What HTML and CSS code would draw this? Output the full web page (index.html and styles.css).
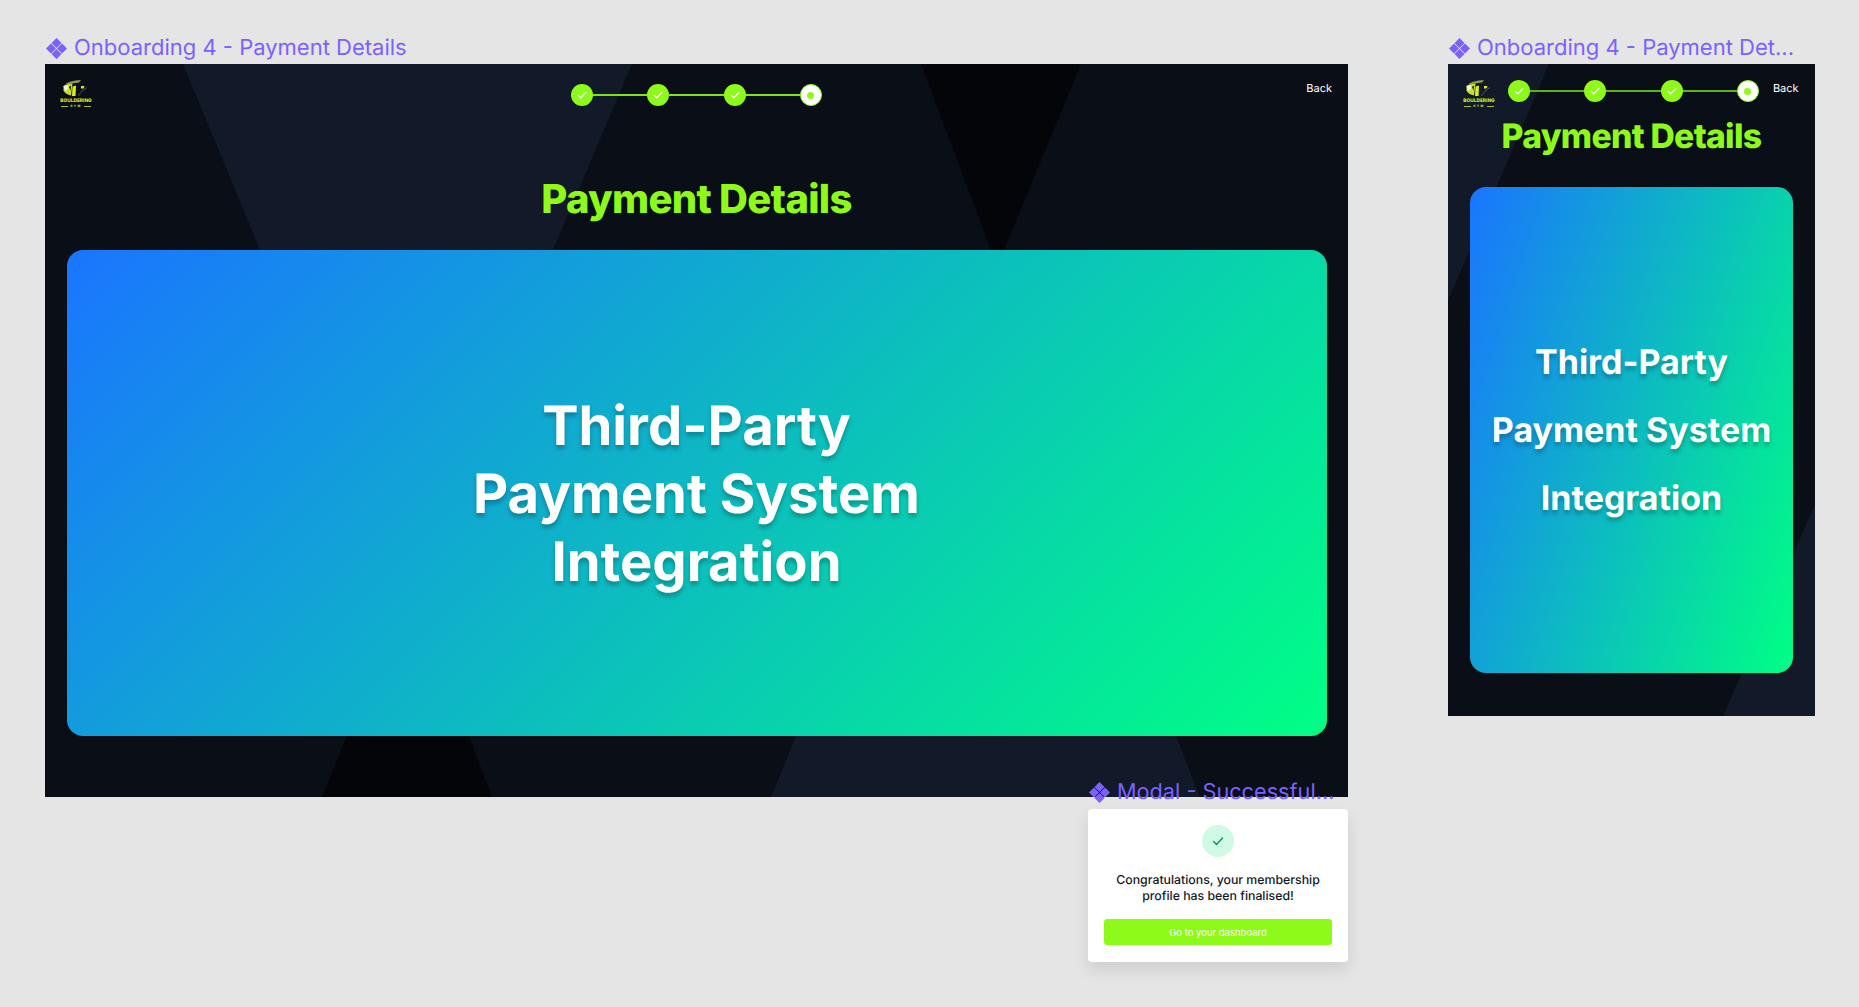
FILE: index.html
```html
<!DOCTYPE html>
<html lang="en">
<head>
    <meta charset="UTF-8">
    <meta name="viewport" content="width=device-width, initial-scale=1.0">
    <title>Onboarding 4 - Payment Details</title>
    <link rel="stylesheet" href="styles.css">
</head>
<body>
    <svg class="defs" width="0" height="0">
        <symbol id="component" viewBox="0 0 21 21">
            <path fill="#7b61ff" d="M10.500 0l5 5-5 5-5-5zM5 5.500l5 5-5 5-5-5zM16 5.500l5 5-5 5-5-5zM10.500 11l5 5-5 5-5-5z"/>
        </symbol>
        <symbol id="tick" viewBox="0 0 12 12">
            <path fill="none" stroke="#fff" stroke-width="1.4" stroke-linecap="round" stroke-linejoin="round" d="M2.200 6.400l2.600 2.400 5-5.400"/>
        </symbol>
        <symbol id="logo" viewBox="0 0 30 18">
            <path fill="#8f9a5c" d="M4 4.500C7 1.800 12 .4 20 0l-2 2.500-10 1.500z"/>
            <path fill="#c6e02a" d="M2.500 6l5-2 4-.5-1.500 12C6.500 15 3.500 13 2.500 10.500z"/>
            <path fill="#f0f5d8" d="M2.500 6l4-1.500 1 4-3.500 3z"/>
            <path fill="#0a0e16" d="M8 7l2-1.500-.5 5z"/>
            <path fill="#d8ee20" d="M11.500 6.500l3.500-1-.5 10.500h-3.500z"/>
            <path fill="#d8ee20" d="M20 6h3.500l-1 2.500h-2.500z"/>
            <path fill="none" stroke="#7d826f" stroke-width=".6" d="M17.500 16c.5-3 3-3 3.500-5l5-3.500"/>
        </symbol>
    </svg>

    <div class="frame-label label-desktop">
        <svg class="label-icon"><use href="#component"></use></svg>
        <span>Onboarding 4 - Payment Details</span>
    </div>
    <div class="frame-label label-mobile">
        <svg class="label-icon"><use href="#component"></use></svg>
        <span>Onboarding 4 - Payment Det...</span>
    </div>

    <!-- desktop frame -->
    <section class="frame frame-desktop">
        <svg class="frame-bg" viewBox="0 0 1303 733" width="1303" height="733">
            <polygon class="shape-light" points="138,0 587,0 508,186 469,280 255,280 215,186"/>
            <polygon class="shape-black" points="876,0 1036,0 959,186 952,204 946,186"/>
            <polygon class="shape-black" points="302,672 424,672 447,733 277,733"/>
            <polygon class="shape-light" points="751,672 1131,672 1155,733 726,733"/>
        </svg>
        <header class="topbar topbar-desktop">
            <div class="logo">
                <svg class="logo-mark"><use href="#logo"></use></svg>
                <div class="logo-name">BOULDERING</div>
                <div class="logo-sub">GYM</div>
            </div>
            <div class="stepper">
                <span class="step"><svg class="tick"><use href="#tick"></use></svg></span>
                <span class="step-line"></span>
                <span class="step"><svg class="tick"><use href="#tick"></use></svg></span>
                <span class="step-line"></span>
                <span class="step"><svg class="tick"><use href="#tick"></use></svg></span>
                <span class="step-line"></span>
                <span class="step step-current"></span>
            </div>
            <a class="back">Back</a>
        </header>
        <h1 class="title">Payment Details</h1>
        <div class="pay-card">
            <p>Third-Party<br>Payment System<br>Integration</p>
        </div>
    </section>

    <!-- mobile frame -->
    <section class="frame frame-mobile">
        <svg class="frame-bg" viewBox="0 0 367 652" width="367" height="652">
            <polygon class="shape-light" points="0,0 101,0 0,237"/>
            <polygon class="shape-light" points="367,440 367,652 275,652"/>
        </svg>
        <header class="topbar topbar-mobile">
            <div class="logo">
                <svg class="logo-mark"><use href="#logo"></use></svg>
                <div class="logo-name">BOULDERING</div>
                <div class="logo-sub">GYM</div>
            </div>
            <div class="stepper">
                <span class="step"><svg class="tick"><use href="#tick"></use></svg></span>
                <span class="step-line"></span>
                <span class="step"><svg class="tick"><use href="#tick"></use></svg></span>
                <span class="step-line"></span>
                <span class="step"><svg class="tick"><use href="#tick"></use></svg></span>
                <span class="step-line"></span>
                <span class="step step-current"></span>
            </div>
            <a class="back">Back</a>
        </header>
        <h1 class="title">Payment Details</h1>
        <div class="pay-card">
            <p>Third-Party<br>Payment System<br>Integration</p>
        </div>
    </section>

    <div class="frame-label label-modal">
        <svg class="label-icon"><use href="#component"></use></svg>
        <span>Modal - Successful...</span>
    </div>
    <section class="modal">
        <div class="modal-icon">
            <svg width="14" height="14" viewBox="0 0 14 14"><path fill="none" stroke="#059669" stroke-width="1.4" stroke-linecap="round" stroke-linejoin="round" d="M2.500 7.500l3 3 6-6.500"/></svg>
        </div>
        <p class="modal-text">Congratulations, your membership<br>profile has been finalised!</p>
        <button class="modal-btn">Go to your dashboard</button>
    </section>
</body>
</html>
```

FILE: styles.css
```css
* {
    box-sizing: border-box;
}
body {
    margin: 0;
    width: 1859px;
    height: 1007px;
    position: relative;
    overflow: hidden;
    background: #e5e5e5;
    font-family: Inter, "Liberation Sans", sans-serif;
    text-rendering: geometricPrecision;
}
.defs {
    position: absolute;
}

/* canvas items */
.frame-label {
    position: absolute;
    display: flex;
    align-items: center;
    gap: 7px;
    height: 26px;
    color: #7b61ff;
    font-size: 22px;
    white-space: nowrap;
    z-index: 2;
}
.label-icon {
    width: 21px;
    height: 21px;
    flex: none;
}
.label-desktop {
    left: 46px;
    top: 35px;
}
.label-mobile {
    left: 1449px;
    top: 35px;
}
.label-modal {
    left: 1089px;
    top: 779px;
    font-size: 21.700px;
}

.frame {
    position: absolute;
    top: 64px;
    display: flex;
    flex-direction: column;
    align-items: center;
    background: #0a0e16;
    overflow: hidden;
}
.frame-desktop {
    left: 45px;
    width: 1303px;
    height: 733px;
}
.frame-mobile {
    left: 1448px;
    width: 367px;
    height: 652px;
}
.frame-bg {
    position: absolute;
    left: 0;
    top: 0;
}
.shape-light {
    fill: #121929;
}
.shape-black {
    fill: #040509;
}

/* top bar */
.topbar {
    position: relative;
    width: 100%;
    display: grid;
    align-items: start;
}
.topbar-desktop {
    grid-template-columns: 1fr auto 1fr;
    height: 62px;
    padding: 16px 16px 0;
}
.topbar-mobile {
    grid-template-columns: 30px auto 1fr;
    column-gap: 14px;
    height: 48px;
    padding: 16px 17px 0 16px;
}
.logo {
    width: 30px;
    display: flex;
    flex-direction: column;
    align-items: center;
    color: #d8ee20;
}
.logo-mark {
    width: 30px;
    height: 18px;
}
.logo-name {
    font-size: 4.800px;
    font-weight: 800;
    line-height: 6px;
    white-space: nowrap;
}
.logo-sub {
    width: 100%;
    display: flex;
    align-items: center;
    justify-content: center;
    gap: 2px;
    font-size: 3px;
    font-weight: 700;
    line-height: 4px;
    letter-spacing: 1.5px;
    white-space: nowrap;
}
.logo-sub::before,
.logo-sub::after {
    content: "";
    flex: 1;
    height: 1px;
    background: #a8ba20;
}
.stepper {
    display: flex;
    align-items: center;
}
.topbar-desktop .stepper {
    margin-top: 4px;
}
.step {
    width: 22px;
    height: 22px;
    flex: none;
    display: flex;
    align-items: center;
    justify-content: center;
    border-radius: 50%;
    background: #8dfa1a;
}
.step-line {
    width: 54.300px;
    height: 2px;
    background: #7fe318;
}
.topbar-mobile .step-line {
    background: #5cb314;
}
.step-current {
    background: #fff;
    border: 1px solid #8dfa1a;
}
.step-current::after {
    content: "";
    width: 7px;
    height: 7px;
    border-radius: 50%;
    background: #8dfa1a;
}
.tick {
    width: 12px;
    height: 12px;
}
.back {
    justify-self: end;
    color: #fff;
    font-size: 11px;
    line-height: 16px;
}

.title {
    position: relative;
    margin: 0;
    color: #8dfa1a;
    font-weight: 800;
    letter-spacing: -0.7px;
    text-align: center;
}
.frame-desktop .title {
    font-size: 40px;
    line-height: 48px;
    margin-top: 49px;
}
.frame-mobile .title {
    font-size: 33.700px;
    line-height: 40px;
    margin-top: 5px;
}

.pay-card {
    position: relative;
    height: 486px;
    display: flex;
    align-items: center;
    justify-content: center;
    border-radius: 16px;
    color: #fff;
    font-weight: 700;
    line-height: 68px;
    text-align: center;
    text-shadow: 0 4px 4px rgba(0, 0, 0, 0.25);
}
.pay-card p {
    margin: 0;
}
.frame-desktop .pay-card {
    width: 1260px;
    margin-top: 27px;
    padding-top: 2px;
    font-size: 54.400px;
    background: linear-gradient(135deg, #1a75ff 0%, #00ff85 100%);
}
.frame-mobile .pay-card {
    width: 323px;
    margin-top: 30px;
    padding-top: 2px;
    font-size: 34px;
    background: linear-gradient(108deg, #1a75ff 0%, #00ff85 100%);
}

/* modal */
.modal {
    position: absolute;
    left: 1088px;
    top: 809px;
    width: 260px;
    height: 153px;
    display: flex;
    flex-direction: column;
    align-items: center;
    padding: 16px 16px 0;
    background: #fff;
    border-radius: 4px;
    box-shadow: 0 8px 16px rgba(0, 0, 0, 0.1);
}
.modal-icon {
    width: 32px;
    height: 32px;
    display: flex;
    align-items: center;
    justify-content: center;
    border-radius: 50%;
    background: #d1fae5;
}
.modal-text {
    margin: 15px 0 0;
    color: #111827;
    font-size: 12.300px;
    font-weight: 500;
    line-height: 16px;
    text-align: center;
    white-space: nowrap;
}
.modal-btn {
    width: 228px;
    height: 26px;
    margin-top: 15px;
    border: none;
    border-radius: 3px;
    background: #8dfa1a;
    color: #fff;
    font-family: inherit;
    font-size: 9.500px;
}
```
